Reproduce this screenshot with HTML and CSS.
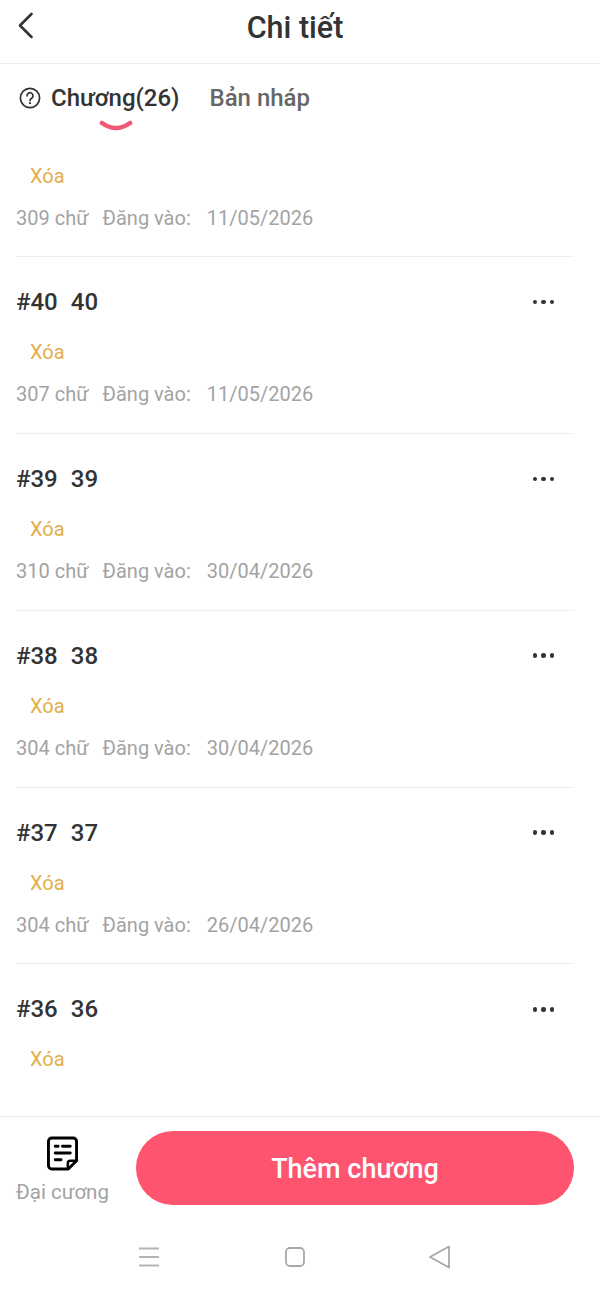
FILE: index.html
```html
<!DOCTYPE html>
<html lang="vi">
<head>
<meta charset="utf-8">
<title>Chi tiết</title>
<link rel="stylesheet" href="styles.css">
</head>
<body>
<div class="page">
  <header class="header">
    <svg class="back" width="18" height="28" viewBox="0 0 18 28"><path d="M15.500 2 4 13.500 15.500 25" fill="none" stroke="#333" stroke-width="2.600" stroke-linecap="round" stroke-linejoin="round"/></svg>
    <h1 class="heading">Chi tiết</h1>
  </header>
  <nav class="tabs">
    <svg class="help" width="22" height="22" viewBox="0 0 22 22"><circle cx="11" cy="11" r="9.600" fill="none" stroke="#333" stroke-width="1.700"/><path d="M8 8.800a3 3 0 1 1 4.600 2.500c-1 .6-1.600 1.100-1.600 2.200" fill="none" stroke="#333" stroke-width="1.700" stroke-linecap="round"/><circle cx="11" cy="16.200" r="1.100" fill="#333"/></svg>
    <div class="tab tab-active">Chương(26)
      <svg class="smile" width="34" height="14" viewBox="0 0 34 14"><path d="M3 3Q17 13 31 3" fill="none" stroke="#f0587a" stroke-width="4.600" stroke-linecap="round"/></svg>
    </div>
    <div class="tab tab-muted">Bản nháp</div>
  </nav>
  <main class="list">
    <section class="row row-cut">
      <div class="del">Xóa</div>
      <div class="meta"><span>309 chữ</span><span>Đăng vào:</span><span class="date">11/05/2026</span></div>
    </section>
    <section class="row">
      <div class="title"><span>#40</span><span>40</span><b class="dots"><i></i><i></i><i></i></b></div>
      <div class="del">Xóa</div>
      <div class="meta"><span>307 chữ</span><span>Đăng vào:</span><span class="date">11/05/2026</span></div>
    </section>
    <section class="row">
      <div class="title"><span>#39</span><span>39</span><b class="dots"><i></i><i></i><i></i></b></div>
      <div class="del">Xóa</div>
      <div class="meta"><span>310 chữ</span><span>Đăng vào:</span><span class="date">30/04/2026</span></div>
    </section>
    <section class="row">
      <div class="title"><span>#38</span><span>38</span><b class="dots"><i></i><i></i><i></i></b></div>
      <div class="del">Xóa</div>
      <div class="meta"><span>304 chữ</span><span>Đăng vào:</span><span class="date">30/04/2026</span></div>
    </section>
    <section class="row">
      <div class="title"><span>#37</span><span>37</span><b class="dots"><i></i><i></i><i></i></b></div>
      <div class="del">Xóa</div>
      <div class="meta"><span>304 chữ</span><span>Đăng vào:</span><span class="date">26/04/2026</span></div>
    </section>
    <section class="row">
      <div class="title"><span>#36</span><span>36</span><b class="dots"><i></i><i></i><i></i></b></div>
      <div class="del">Xóa</div>
    </section>
  </main>
  <footer class="footer">
    <div class="outline">
      <svg width="31" height="35" viewBox="0 0 32 35"><path d="M5 1.500h22a3.500 3.500 0 0 1 3.500 3.500v20L22 33.500H5A3.500 3.500 0 0 1 1.500 30V5A3.500 3.500 0 0 1 5 1.500Z" fill="#fff" stroke="#000" stroke-width="3" stroke-linejoin="round"/><path d="M30 25h-6a2.500 2.500 0 0 0-2.500 2.500V33" fill="none" stroke="#000" stroke-width="2.600" stroke-linejoin="round"/><path d="M8.500 10h3M16 10h8M8.500 17h15.500M8.500 24h6" fill="none" stroke="#000" stroke-width="3" stroke-linecap="round"/></svg>
      <span class="outline-label">Đại cương</span>
    </div>
    <button class="add" type="button">Thêm chương</button>
  </footer>
  <div class="sysnav">
    <svg width="22" height="20" viewBox="0 0 22 20"><path d="M1 1.500h20M1 10h20M1 18.500h20" stroke="#b4b4b4" stroke-width="1.800"/></svg>
    <svg width="22" height="22" viewBox="0 0 22 22"><rect x="2" y="2" width="18" height="18" rx="4" fill="none" stroke="#a8a8a8" stroke-width="1.800"/></svg>
    <svg class="sys-back" width="24" height="24" viewBox="0 0 24 24"><path d="M21 1.500v21L2 12Z" fill="none" stroke="#a8a8a8" stroke-width="1.800" stroke-linejoin="round"/></svg>
  </div>
</div>
</body>
</html>
```
FILE: styles.css
```css
* { box-sizing: border-box; }
html, body { margin: 0; padding: 0; background: #fff; }
.page {
  width: 600px;
  height: 1293px;
  display: flex;
  flex-direction: column;
  overflow: hidden;
  font-family: Roboto, "Noto Sans", sans-serif;
  color: #333;
}
.header {
  position: relative;
  height: 64px;
  flex: none;
  border-bottom: 1px solid #eee;
  display: flex;
  align-items: center;
  justify-content: center;
}
.back { position: absolute; left: 16px; top: 12px; }
.heading { margin: 0 10px 8px 0; font-size: 30.5px; line-height: 40px; font-weight: 500; color: #333; }
.tabs {
  height: 84px;
  flex: none;
  display: flex;
  align-items: flex-start;
  padding: 18px 0 0 19px;
}
.help { margin: 5px 10px 0 0; flex: none; }
.tab { position: relative; font-size: 24px; line-height: 32px; font-weight: 500; white-space: nowrap; }
.tab-active { color: #333; }
.tab-muted { color: #666; margin-left: 30px; }
.smile { position: absolute; left: 48px; top: 38px; }
.list { flex: 1; min-height: 0; overflow: hidden; padding: 0 26px 0 16px; }
.row { height: 176.85px; padding-top: 30px; border-bottom: 1px solid #eee; }
.row-cut { height: 109px; padding-top: 13px; }
.row:last-child { border-bottom: 0; }
.title {
  display: flex;
  align-items: center;
  gap: 13px;
  height: 30px;
  font-size: 24px;
  font-weight: 500;
  color: #333;
}
.dots { margin-left: auto; margin-right: 20px; display: flex; gap: 4px; }
.dots i { width: 4.5px; height: 4.5px; border-radius: 50%; background: #333; }
.del { margin: 20px 0 0 14px; font-size: 20px; line-height: 30px; color: #e3ae4a; }
.row-cut .del { margin-top: 0; }
.meta {
  display: flex;
  gap: 14px;
  margin-top: 12px;
  font-size: 20px;
  line-height: 30px;
  color: #a3a3a3;
}
.date { margin-left: 2px; }
.footer {
  height: 107px;
  flex: none;
  border-top: 1px solid #e6e6e6;
  display: flex;
  padding: 14px 26px 0 16px;
  align-items: flex-start;
  gap: 27px;
}
.outline { width: 93px; flex: none; display: flex; flex-direction: column; align-items: center; padding-top: 5px; }
.outline-label { font-size: 20.5px; line-height: 28px; color: #a3a3a3; margin-top: 7px; white-space: nowrap; }
.add {
  flex: 1;
  height: 74px;
  border: 0;
  border-radius: 37px;
  background: #ff5470;
  color: #fff;
  font-family: inherit;
  font-size: 27px;
  font-weight: 500;
  padding: 2px 0 0;
}
.sysnav {
  height: 70px;
  flex: none;
  display: flex;
  align-items: center;
  gap: 124px;
  padding: 0 0 2px 138px;
}
.sys-back { margin-left: -2px; }
```
